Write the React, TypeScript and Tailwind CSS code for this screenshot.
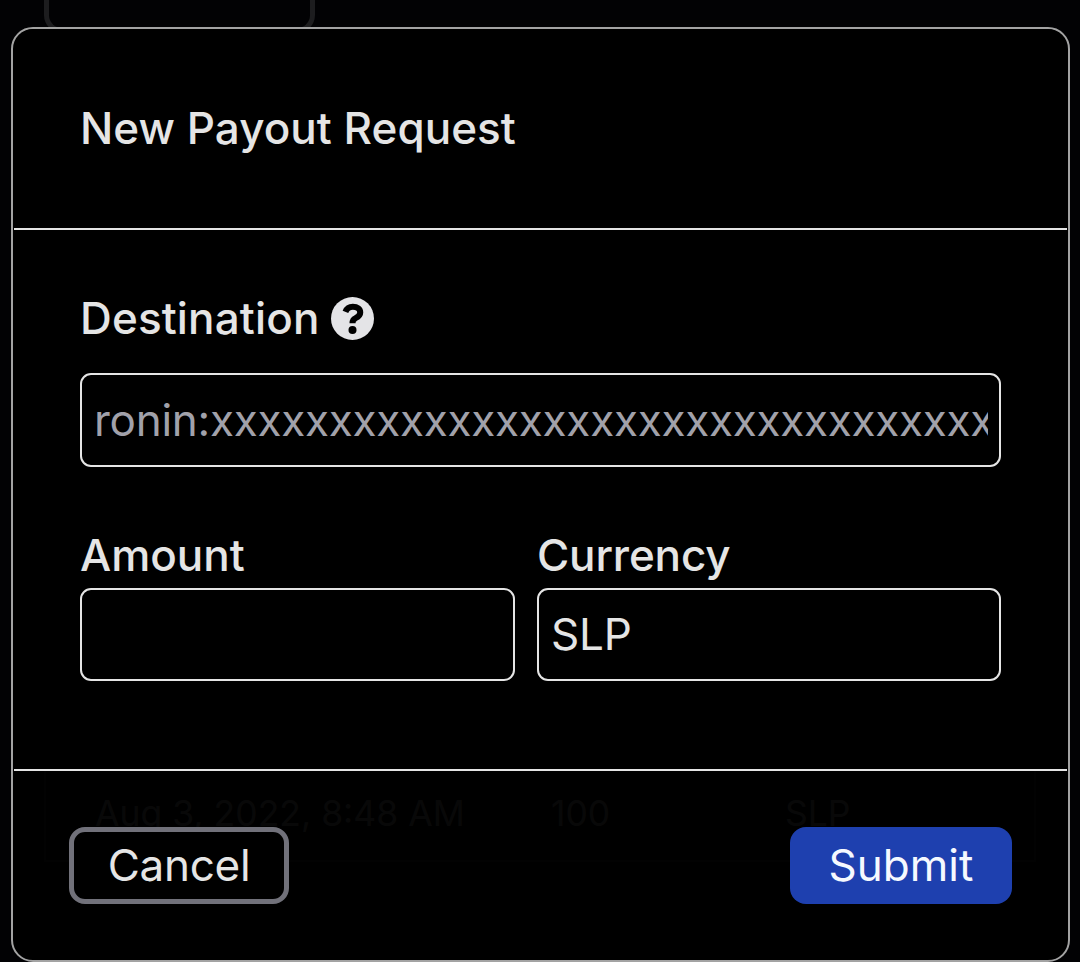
function QuestionIcon() {
  return (
    <svg viewBox="0 0 128 128" className="ml-[11.5px] h-[43px] w-[43px]">
      <circle cx="64" cy="64" r="64" fill="#e4e4e7" />
      <path
        d="M43 44 C47 34 54 29 65 29 C79 29 87 36 87 46 C87 54 81 59 73 63 C66 66 64 70 64 78"
        fill="none"
        stroke="#000"
        strokeWidth="18"
      />
      <circle cx="64" cy="98" r="12" fill="#000" />
    </svg>
  );
}

export default function App() {
  const payouts = [{ date: 'Aug 3, 2022, 8:48 AM', amount: '100', currency: 'SLP' }];

  return (
    <div className="relative flex h-[962px] w-[1080px] flex-col justify-between overflow-hidden bg-[#020204] font-['Inter',sans-serif] text-[44px] leading-[66px] text-[#e5e5e5]">
      <div className="ml-11 h-[33px] w-[271px] rounded-b-[18px] border-[5px] border-t-0 border-[#1d1d1f]" />
      <div className="mx-11 mb-[100px]">
        {payouts.map((payout) => (
          <div
            key={payout.date}
            className="flex h-[96px] border-2 border-t-0 border-[#1c1c1c] px-[49px] pt-[14.5px] text-[35.5px] text-[#585858]"
          >
            <span className="w-[456px]">{payout.date}</span>
            <span className="w-[234px]">{payout.amount}</span>
            <span>{payout.currency}</span>
          </div>
        ))}
      </div>

      <div className="absolute top-[27px] left-[11px] flex h-[935px] w-[1059px] flex-col rounded-[22px] border-2 border-[#a3a3a3] bg-black/90 px-px">
        <div className="flex h-[201px] items-center rounded-t-[20px] bg-black px-[66px] pb-1">
          <h3 className="font-medium tracking-[0.04px]">New Payout Request</h3>
        </div>

        <form className="-mt-[2px] h-[543px] border-y-2 border-[#e5e5e5] bg-black px-[66px] pt-[55px]">
          <label className="flex items-center font-medium tracking-[0.15px]">
            Destination
            <QuestionIcon />
          </label>
          <input
            type="text"
            placeholder="ronin:xxxxxxxxxxxxxxxxxxxxxxxxxxxxxxxxxxxxxxxx"
            className="mt-[22px] block h-[94px] w-[921px] rounded-[11px] border-2 border-[#e5e5e5] bg-black pr-[11px] pl-[12px] tracking-[-0.26px] placeholder:text-[#a1a1aa]"
          />
          <div className="mt-[55px] flex gap-[22px]">
            <label className="font-medium">
              Amount
              <input
                type="text"
                className="block h-[93px] w-[435px] rounded-[11px] border-2 border-[#e5e5e5] bg-black px-[11px]"
              />
            </label>
            <label className="font-medium tracking-[-0.15px]">
              Currency
              <input
                type="text"
                defaultValue="SLP"
                className="block h-[93px] w-[464px] rounded-[11px] border-2 border-[#e5e5e5] bg-black px-[12px] pb-[2px] font-normal"
              />
            </label>
          </div>
        </form>

        <div className="flex justify-between px-[55px] pt-[56px]">
          <button className="h-[77px] w-[220px] rounded-2xl border-[5px] border-[#71717a] bg-black pb-[2px] tracking-[-0.3px]">
            Cancel
          </button>
          <button className="h-[77px] w-[222px] rounded-2xl bg-[#1e40af] pb-[2px] text-[#f5f9ff]">Submit</button>
        </div>
      </div>
    </div>
  );
}
